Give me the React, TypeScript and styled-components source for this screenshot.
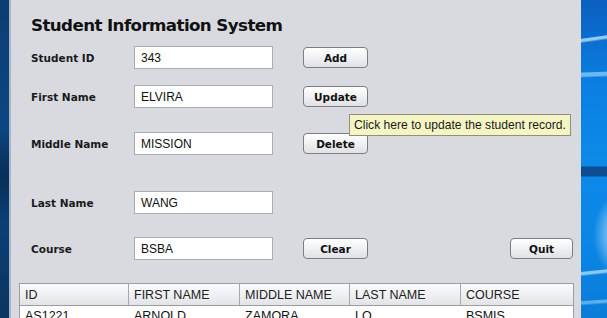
import React from 'react';
import styled, { createGlobalStyle } from 'styled-components';

const GlobalStyle = createGlobalStyle`
  html, body {
    margin: 0;
    padding: 0;
    width: 607px;
    height: 318px;
    overflow: hidden;
  }
  body {
    font-family: 'Liberation Sans', Arial, sans-serif;
  }
`;

const Screen = styled.div`
  display: flex;
  width: 607px;
  height: 318px;
  overflow: hidden;
`;

const LeftDesktop = styled.div`
  width: 9px;
  flex-shrink: 0;
  background: linear-gradient(180deg, #0b3d73 0%, #0c4681 40%, #082f58 55%, #0b3f75 70%, #0a3560 100%);
  border-right: 2px solid #aab6c8;
`;

const RightDesktop = styled.div`
  flex: 1;
  background:
    linear-gradient(172deg, transparent 0 38px, rgba(190, 235, 255, 0.75) 39px 41px, transparent 43px),
    linear-gradient(178deg, transparent 0 72px, rgba(170, 225, 255, 0.6) 73px 76px, transparent 78px),
    linear-gradient(180deg, transparent 0 166px, #0b4c93 167px 176px, transparent 177px),
    radial-gradient(ellipse 40px 60px at 40px 235px, rgba(220, 245, 255, 0.9), transparent 70%),
    linear-gradient(174deg, transparent 0 270px, rgba(190, 235, 255, 0.7) 271px 273px, transparent 275px),
    linear-gradient(176deg, transparent 0 300px, rgba(170, 225, 255, 0.5) 301px 303px, transparent 305px),
    linear-gradient(180deg, #0b5fc0 0%, #0a7ee0 25%, #0c8ae8 50%, #0a86e6 75%, #0b7cd8 100%);
`;

const Panel = styled.div`
  width: 570px;
  flex-shrink: 0;
  background: #d8dae0;
  padding: 13px 0 0 8px;
  box-sizing: border-box;
`;

const Form = styled.div`
  padding-left: 11px;
  position: relative;
`;

const Title = styled.h1`
  margin: 0 0 10px 0;
  padding: 1px 0 0 1px;
  font-family: 'DejaVu Sans', Tahoma, sans-serif;
  font-weight: bold;
  font-size: 16.7px;
  letter-spacing: -0.6px;
  color: #111;
  line-height: 22px;
`;

const Row = styled.div<{ $gap: number }>`
  display: grid;
  grid-template-columns: 104px 169px 207px 63px;
  align-items: center;
  height: 23px;
  margin-top: ${(p) => p.$gap}px;
  position: relative;
`;

const Label = styled.span`
  padding-left: 1px;
  font-family: 'DejaVu Sans', Tahoma, sans-serif;
  font-weight: bold;
  font-size: 10.5px;
  color: #1a1a1a;
`;

const Field = styled.div`
  width: 139px;
  height: 23px;
  box-sizing: border-box;
  background: #fff;
  border: 1px solid #a9adb4;
  padding: 0 6px;
  display: flex;
  align-items: center;
  font-size: 12px;
  color: #111;
`;

const Button = styled.button`
  width: 65px;
  height: 21px;
  box-sizing: border-box;
  border: 1px solid #7a7d83;
  border-radius: 4px;
  background: linear-gradient(180deg, #ffffff 0%, #f1f2f4 45%, #dfe1e5 100%);
  font-family: 'DejaVu Sans', Tahoma, sans-serif;
  font-weight: bold;
  font-size: 10.5px;
  color: #111;
  padding: 0;
  cursor: pointer;
`;

const QuitButton = styled(Button)`
  width: 63px;
`;

const Tooltip = styled.div`
  position: absolute;
  left: 319px;
  top: 29px;
  height: 22px;
  box-sizing: border-box;
  padding: 0 4px;
  display: flex;
  align-items: center;
  background: #f5f5c4;
  border: 1px solid #8f8f80;
  font-size: 12.1px;
  color: #1a1a1a;
  white-space: nowrap;
  z-index: 2;
`;

const Table = styled.div`
  margin-top: 23px;
  width: 553px;
  border: 1px solid #9a9da3;
  border-bottom: none;
  background: #fff;
`;

const HeaderRow = styled.div`
  display: grid;
  grid-template-columns: 109px 111px 110px 111px 1fr;
  height: 21px;
  background: linear-gradient(180deg, #fafafb 0%, #eceef1 60%, #e1e3e7 100%);
  border-bottom: 1px solid #9a9da3;
`;

const HeaderCell = styled.div`
  display: flex;
  align-items: center;
  padding-left: 5px;
  font-size: 12.5px;
  color: #222;
  border-right: 1px solid #a5a8ae;
  &:last-child {
    border-right: none;
  }
`;

const DataRow = styled.div`
  display: grid;
  grid-template-columns: 109px 111px 110px 111px 1fr;
  height: 20px;
`;

const DataCell = styled.div`
  display: flex;
  align-items: center;
  padding-left: 5px;
  font-size: 12.5px;
  color: #111;
`;

const columns = ['ID', 'FIRST NAME', 'MIDDLE NAME', 'LAST NAME', 'COURSE'];
const rows = [['AS1221', 'ARNOLD', 'ZAMORA', 'LO', 'BSMIS']];

const App = () => {
  return (
    <>
      <GlobalStyle />
      <Screen>
        <LeftDesktop />
        <Panel>
          <Form>
            <Title>Student Information System</Title>
            <Row $gap={0}>
              <Label>Student ID</Label>
              <Field>343</Field>
              <Button>Add</Button>
            </Row>
            <Row $gap={16}>
              <Label>First Name</Label>
              <Field>ELVIRA</Field>
              <Button>Update</Button>
              <Tooltip>Click here to update the student record.</Tooltip>
            </Row>
            <Row $gap={24}>
              <Label>Middle Name</Label>
              <Field>MISSION</Field>
              <Button>Delete</Button>
            </Row>
            <Row $gap={36}>
              <Label>Last Name</Label>
              <Field>WANG</Field>
            </Row>
            <Row $gap={23}>
              <Label>Course</Label>
              <Field>BSBA</Field>
              <Button>Clear</Button>
              <QuitButton>Quit</QuitButton>
            </Row>
          </Form>
          <Table>
            <HeaderRow>
              {columns.map((c) => (
                <HeaderCell key={c}>{c}</HeaderCell>
              ))}
            </HeaderRow>
            {rows.map((r) => (
              <DataRow key={r[0]}>
                {r.map((v, i) => (
                  <DataCell key={i}>{v}</DataCell>
                ))}
              </DataRow>
            ))}
          </Table>
        </Panel>
        <RightDesktop />
      </Screen>
    </>
  );
};

export default App;
